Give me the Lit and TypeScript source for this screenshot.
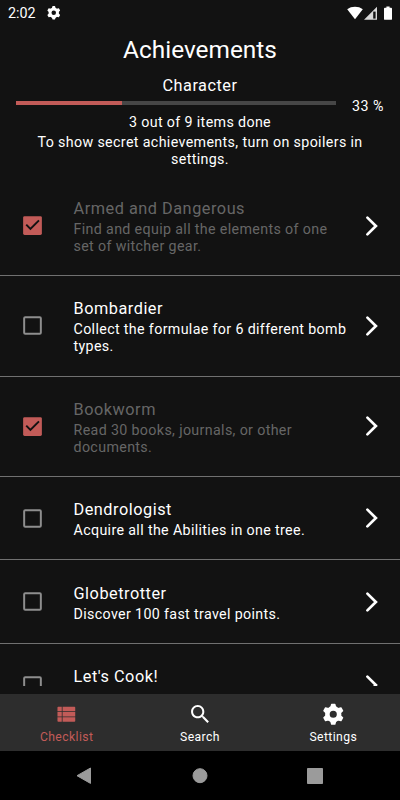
import { LitElement, html, css, svg } from "lit";
import { customElement, property } from "lit/decorators.js";

const gear = () => svg`
  <circle cx="12" cy="12" r="5.75" fill="none" stroke="currentColor" stroke-width="4.5"/>
  ${[0, 60, 120, 180, 240, 300].map(
    (a) => svg`<path transform="rotate(${a} 12 12)" fill="currentColor" d="M8.8 6L9.8 2.2Q9.9 1.7 10.4 1.7H13.6Q14.1 1.7 14.2 2.2L15.2 6Z"/>`
  )}`;

interface Achievement {
  title: string;
  lines: string[];
  done: boolean;
}

const ITEMS: Achievement[] = [
  { title: "Armed and Dangerous", lines: ["Find and equip all the elements of one", "set of witcher gear."], done: true },
  { title: "Bombardier", lines: ["Collect the formulae for 6 different bomb", "types."], done: false },
  { title: "Bookworm", lines: ["Read 30 books, journals, or other", "documents."], done: true },
  { title: "Dendrologist", lines: ["Acquire all the Abilities in one tree."], done: false },
  { title: "Globetrotter", lines: ["Discover 100 fast travel points."], done: false },
  { title: "Let's Cook!", lines: [""], done: false },
];

@customElement("achievement-row")
export class AchievementRow extends LitElement {
  @property({ attribute: false }) item!: Achievement;

  static styles = css`
    :host { display: block; }
    .row {
      display: flex;
      align-items: center;
      box-sizing: border-box;
      height: 83.4px;
      border-bottom: 1px solid #707070;
    }
    .row.tall { height: 100.4px; }
    .box { flex: none; width: 25px; height: 25px; margin-left: 20px; }
    .text { flex: 1; margin-left: 28.5px; padding-top: 2px; color: #fff; white-space: nowrap; }
    .done .text { color: #666; }
    .title { font-size: 16.3px; line-height: 21px; letter-spacing: 0.52px; margin-bottom: 2px; }
    .line { font-size: 14.25px; line-height: 17.1px; min-height: 17.1px; letter-spacing: 0.35px; }
    .chevron { flex: none; width: 14px; height: 22px; margin-right: 21px; }
  `;

  render() {
    const { title, lines, done } = this.item;
    return html`
      <div class="row ${lines.length > 1 ? "tall" : ""} ${done ? "done" : ""}">
        <svg class="box" viewBox="0 0 24 24">
          ${done
            ? svg`<rect x="3" y="3" width="18" height="18" rx="1.4" fill="#c25b58"/><path fill="none" stroke="#121212" stroke-width="1.9" d="M6 11.2L10 15.3L18.2 7.1"/>`
            : svg`<rect x="4" y="4" width="16" height="16" rx="1" fill="none" stroke="#8e8e8e" stroke-width="1.9"/>`}
        </svg>
        <div class="text">
          <div class="title">${title}</div>
          ${lines.map((l) => html`<div class="line">${l}</div>`)}
        </div>
        <svg class="chevron" viewBox="0 0 14 22">
          <path d="M2.4 2.6L10.9 11L2.4 19.4" fill="none" stroke="#fff" stroke-width="2.7" stroke-linecap="round"/>
        </svg>
      </div>
    `;
  }
}

@customElement("app-root")
export class AppRoot extends LitElement {
  @property({ type: Number }) progress = 33;

  static styles = css`
    :host {
      display: flex;
      flex-direction: column;
      width: 400px;
      height: 800px;
      overflow: hidden;
      background: #121212;
      color: #fff;
      font-family: Roboto, "Noto Sans", sans-serif;
    }
    .status { display: flex; align-items: center; height: 25px; flex: none; padding: 0 7px 0 8px; }
    .clock { font-size: 14.3px; letter-spacing: 0; }
    .status-gear { width: 15.5px; height: 15.5px; margin-left: 10.5px; }
    .signals { width: 48px; height: 16px; margin-left: auto; }
    .head { flex: none; height: 150.9px; text-align: center; white-space: nowrap; }
    .heading { font-size: 24.4px; line-height: 30px; padding-top: 10px; }
    .category { font-size: 16.3px; line-height: 20px; letter-spacing: 0.5px; padding-top: 11px; }
    .meter { display: flex; align-items: flex-start; height: 13px; padding: 5px 16px 0; }
    .track { width: 320px; height: 4px; background: #464646; }
    .fill { height: 100%; background: #c25b58; }
    .percent { flex: 1; text-align: right; font-size: 14.25px; line-height: 17px; margin-top: -3px; letter-spacing: 0.5px; }
    .note { font-size: 14.25px; line-height: 17.1px; letter-spacing: 0.36px; }
    .count { padding-bottom: 3px; }
    .list { flex: none; height: 510.1px; overflow: hidden; }
    .tabs { flex: none; display: flex; height: 57px; margin-top: 8px; background: #2d2d2d; }
    .tab { flex: 1; display: flex; flex-direction: column; align-items: center; padding-top: 8px; }
    .tab svg { flex: none; width: 24.5px; height: 24.5px; }
    .tab-label { font-size: 12.2px; line-height: 15px; margin-top: 3.5px; letter-spacing: 0.4px; }
    .active { color: #c25b58; }
    .system { flex: 1; display: flex; align-items: center; justify-content: center; background: #000; }
    .system svg { width: 400px; height: 49px; }
  `;

  render() {
    return html`
      <div class="status">
        <span class="clock">2:02</span>
        <svg class="status-gear" viewBox="0 0 24 24">${gear()}</svg>
        <svg class="signals" viewBox="0 0 48 16">
          <path fill="#fff" d="M2.2 4.2C6.5 .9 13.5 .9 17.8 4.2L10 14.2z"/>
          <path fill="#d8d8d8" d="M32 1.8V14.8H19z"/>
          <path fill="#121212" d="M28.2 6.6h2.4v7h-2.4z"/>
          <path fill="#fff" d="M41.4 1.4h3.2v1.4h1.5q.9 0 .9.9v10.2q0 .9-.9.9h-6.2q-.9 0-.9-.9V3.7q0-.9.9-.9h1.5z"/>
        </svg>
      </div>
      <div class="head">
        <div class="heading">Achievements</div>
        <div class="category">Character</div>
        <div class="meter">
          <div class="track"><div class="fill" style="width:${this.progress}%"></div></div>
          <div class="percent">${this.progress} %</div>
        </div>
        <div class="note count">3 out of 9 items done</div>
        <div class="note">To show secret achievements, turn on spoilers in</div>
        <div class="note">settings.</div>
      </div>
      <div class="list">
        ${ITEMS.map((item) => html`<achievement-row .item=${item}></achievement-row>`)}
      </div>
      <div class="tabs">
        ${this.tab("Checklist", svg`<path d="M4.2 4.7H7.6V9H3.4V5.5Q3.4 4.7 4.2 4.7zM8.4 4.7H20Q20.8 4.7 20.8 5.5V9H8.4zM3.4 9.9H7.6V14.1H3.4zM8.4 9.9H20.8V14.1H8.4zM3.4 15H7.6V19.3H4.2Q3.4 19.3 3.4 18.5zM8.4 15H20.8V18.5Q20.8 19.3 20 19.3H8.4z"/>`, true)}
        ${this.tab("Search", svg`<path d="M15.5 14h-.79l-.28-.27C15.41 12.59 16 11.11 16 9.5 16 5.91 13.09 3 9.5 3S3 5.91 3 9.5 5.91 16 9.5 16c1.61 0 3.09-.59 4.23-1.57l.27.28v.79l5 4.99L20.49 19l-4.99-5zm-6 0C7.01 14 5 11.99 5 9.5S7.01 5 9.5 5 14 7.01 14 9.5 11.99 14 9.5 14z"/>`)}
        ${this.tab("Settings", gear())}
      </div>
      <div class="system">
        <svg viewBox="0 0 400 49">
          <g fill="#9b9b9b" stroke="#9b9b9b" stroke-linejoin="round">
            <path d="M77 24.7L90.5 17v15.4z"/>
            <circle cx="200" cy="24.7" r="7"/>
            <rect x="307.5" y="17.5" width="15" height="15"/>
          </g>
        </svg>
      </div>
    `;
  }

  private tab(label: string, icon: unknown, active = false) {
    return html`
      <div class="tab ${active ? "active" : ""}">
        <svg viewBox="0 0 24 24" fill="currentColor" color=${active ? "#c25b58" : "#fff"}>${icon}</svg>
        <span class="tab-label">${label}</span>
      </div>
    `;
  }
}
